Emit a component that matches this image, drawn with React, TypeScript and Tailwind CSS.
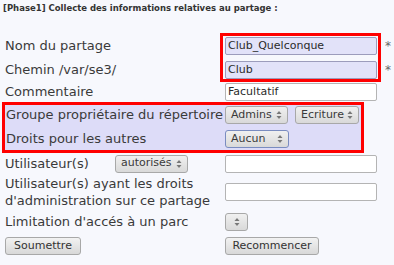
import React from 'react';

const font = { fontFamily: '"DejaVu Sans", Verdana, sans-serif' };

function Arrows() {
    return (
        <svg width="6" height="10" viewBox="0 0 6 10" className="shrink-0">
            <path d="M3 1 L5.5 4 L0.5 4 Z" fill="#777" />
            <path d="M3 9 L5.5 6 L0.5 6 Z" fill="#777" />
        </svg>
    );
}

function Select({ label, w, focus = false }: { label: string; w: string; focus?: boolean }) {
    return (
        <div
            className={`${w} h-[18px] flex items-center justify-between rounded-[3px] border pl-[5px] pr-[5px] text-[11px] text-[#3a3a3a] bg-gradient-to-b from-[#f0f0f0] to-[#d9d9d9] ${focus ? 'border-[#7a8cc0]' : 'border-[#a8a8a8]'}`}
        >
            <span>{label}</span>
            <Arrows />
        </div>
    );
}

function Input({ value = '', tinted = false }: { value?: string; tinted?: boolean }) {
    return (
        <div
            className={`w-[152px] h-[18px] flex items-center rounded-[2px] border px-[2px] text-[11px] text-[#2b2b2b] ${tinted ? 'bg-[#e2e2f9] border-[#9c9cbc]' : 'bg-white border-[#b4b4b4]'}`}
        >
            {value}
        </div>
    );
}

function Button({ label, w }: { label: string; w: string }) {
    return (
        <div className={`${w} h-[18px] flex items-center justify-center rounded-[3px] border border-[#a8a8a8] bg-gradient-to-b from-[#f2f2f2] to-[#d8d8d8] text-[11px] text-[#333]`}>
            {label}
        </div>
    );
}

export default function App() {
    return (
        <div className="w-[394px] h-[265px] bg-[#f7f8fd] text-[#3a3a3a] overflow-hidden" style={font}>
            <div className="h-[16px] pl-[3px] flex items-center text-[8.5px] font-bold text-[#333]">
                [Phase1] Collecte des informations relatives au partage :
            </div>

            <div className="h-[17px]" />

            {/* nom + chemin */}
            <div className="flex h-[49px]">
                <div className="w-[220px] pl-[5px] flex flex-col text-[13px]">
                    <div className="h-[4px]" />
                    <div className="h-[18px] flex items-center">Nom du partage</div>
                    <div className="h-[6px]" />
                    <div className="h-[18px] flex items-center">Chemin /var/se3/</div>
                </div>
                <div className="w-[161px] border-[3px] border-[#ff0000] pl-[2px] pt-[1px] flex flex-col gap-[6px]">
                    <Input value="Club_Quelconque" tinted />
                    <Input value="Club" tinted />
                </div>
                <div className="flex flex-col pl-[4px] text-[12px] text-[#666]">
                    <div className="h-[4px]" />
                    <div className="h-[18px] flex items-center">*</div>
                    <div className="h-[6px]" />
                    <div className="h-[18px] flex items-center">*</div>
                </div>
            </div>

            {/* commentaire */}
            <div className="flex h-[20px] items-start pt-[1px]">
                <div className="w-[225px] pl-[5px] h-[18px] flex items-center text-[13px]">Commentaire</div>
                <Input value="Facultatif" />
            </div>

            {/* groupe + droits */}
            <div className="ml-[2px] w-[362px] h-[51px] border-[3px] border-[#ff0000] bg-[#dddcf8] flex flex-col text-[13px]">
                <div className="h-[1px]" />
                <div className="flex h-[18px] items-center">
                    <div className="w-[220px] pl-[1px]">Groupe propriétaire du répertoire</div>
                    <Select label="Admins" w="w-[63px]" />
                    <div className="w-[7px]" />
                    <Select label="Ecriture" w="w-[64px]" />
                </div>
                <div className="h-[6px]" />
                <div className="flex h-[18px] items-center">
                    <div className="w-[220px] pl-[1px]">Droits pour les autres</div>
                    <Select label="Aucun" w="w-[64px]" focus />
                </div>
            </div>

            {/* utilisateurs */}
            <div className="flex h-[21px] items-center text-[13px]">
                <div className="w-[115px] pl-[5px]">Utilisateur(s)</div>
                <Select label="autorisés" w="w-[73px]" />
                <div className="w-[37px]" />
                <Input />
            </div>

            {/* admins */}
            <div className="flex h-[36px] items-center text-[13px]">
                <div className="w-[225px] pl-[5px] leading-[17px]">
                    Utilisateur(s) ayant les droits<br />d'administration sur ce partage
                </div>
                <Input />
            </div>

            {/* parc */}
            <div className="flex h-[24px] items-center text-[13px]">
                <div className="w-[225px] pl-[5px]">Limitation d'accés à un parc</div>
                <div className="w-[23px] h-[18px] flex items-center justify-center rounded-[3px] border border-[#a8a8a8] bg-gradient-to-b from-[#f0f0f0] to-[#d9d9d9]">
                    <Arrows />
                </div>
            </div>

            {/* boutons */}
            <div className="flex h-[24px] items-center">
                <div className="w-[225px] pl-[5px]">
                    <Button label="Soumettre" w="w-[76px]" />
                </div>
                <Button label="Recommencer" w="w-[94px]" />
            </div>
        </div>
    );
}
